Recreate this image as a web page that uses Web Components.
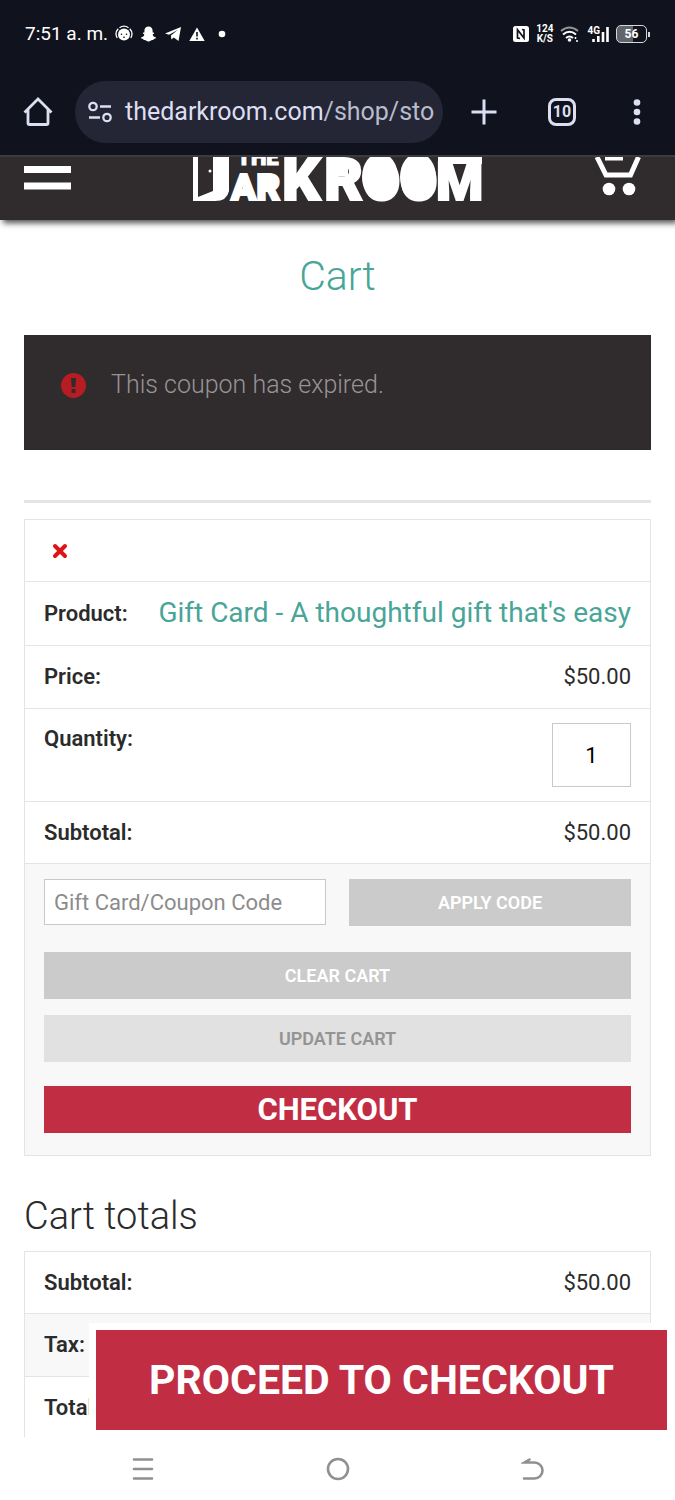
<!DOCTYPE html>
<html lang="en">
<head>
<meta charset="utf-8">
<meta name="viewport" content="width=device-width, initial-scale=1">
<title>Cart - The Darkroom</title>
<style>
  body { margin: 0; font-family: Roboto, "Liberation Sans", sans-serif; color: #2b2b2b; background: #fff; }
</style>
</head>
<body>
<phone-screen>
  <status-bar slot="top"></status-bar>
  <browser-toolbar slot="top"></browser-toolbar>
  <site-header></site-header>
  <cart-page>
    <notice-banner>This coupon has expired.</notice-banner>
    <cart-table></cart-table>
    <totals-table></totals-table>
  </cart-page>
  <checkout-bar slot="overlay"></checkout-bar>
  <system-nav slot="bottom"></system-nav>
</phone-screen>

<script>
const define = (name, html) => {
  const template = document.createElement('template');
  template.innerHTML = html;
  customElements.define(name, class extends HTMLElement {
    constructor() {
      super();
      this.attachShadow({ mode: 'open' }).append(template.content.cloneNode(true));
    }
  });
};

define('phone-screen', `
<style>
  :host { display: flex; flex-direction: column; height: 100vh; }
  .view { flex: 1; min-height: 0; position: relative; overflow: hidden; }
</style>
<slot name="top"></slot>
<div class="view"><slot></slot><slot name="overlay"></slot></div>
<slot name="bottom"></slot>`);

define('status-bar', `
<style>
  :host { display: flex; align-items: center; justify-content: space-between; height: 68px; padding: 0 25px; background: #10131d; color: #fff; }
  .group { display: flex; align-items: center; gap: 7px; }
  .time { font-size: 19px; line-height: 24px; }
  svg { display: block; }
  .speed { display: grid; font-size: 10px; line-height: 10px; font-weight: 700; text-align: center; }
  .signal { display: flex; }
  .cell { font-size: 10px; line-height: 10px; font-weight: 700; }
  .bars { margin-left: -8px; }
  .power { display: flex; align-items: center; gap: 1px; }
  .battery { box-sizing: border-box; width: 31px; height: 18px; border: 1px solid #d8d8dc; border-radius: 5px; font-size: 12px; line-height: 16px; font-weight: 700; text-align: center; background: linear-gradient(90deg, #62646b 55%, transparent 55%); }
  .tip { width: 2px; height: 5px; background: #d8d8dc; }
</style>
<div class="group">
  <span class="time">7:51 a. m.</span>
  <svg width="18" height="18" viewBox="0 0 18 18" aria-hidden="true"><circle cx="9" cy="9.500" r="6" fill="#fff"/><path d="M2.200 13a8 8 0 0 1 1-9.300M15.800 13a8 8 0 0 0-1-9.300M4.500 2.700a8 8 0 0 1 9 0" fill="none" stroke="#fff" stroke-width="1.300"/><circle cx="6.500" cy="9.200" r=".8" fill="#10131d"/><circle cx="11.500" cy="9.200" r=".8" fill="#10131d"/><path d="M8 12q1 .8 2 0" stroke="#10131d" fill="none"/></svg>
  <svg width="17" height="16" viewBox="0 0 17 16" aria-hidden="true"><path d="M8.500.5C11 .5 12.600 2.200 12.600 4.600v2c.7 0 1.500 0 1.500.6 0 .7-1.500.9-1.400 1.500.3 1.300 1.500 2.200 3.300 2.700.3.900-1 1.300-2.300 1.500-.2.700-.2 1.100-.8 1.100-2.200-.2-2.300 1.500-4.400 1.500S6.300 13.800 4.100 14c-.6 0-.6-.4-.8-1.100C2 12.700.7 12.300 1 11.400c1.800-.5 3-1.400 3.300-2.700.1-.6-1.400-.8-1.400-1.500 0-.6.800-.6 1.500-.6v-2C4.400 2.200 6 .5 8.500.5Z" fill="#fff"/></svg>
  <svg width="18" height="16" viewBox="0 0 18 16" aria-hidden="true"><path d="M1 7.500 17 1l-2.500 14-4.700-3.600-2.400 2.200-.5-4L14 3.700 5.200 8.800Z" fill="#fff"/></svg>
  <svg width="16" height="15" viewBox="0 0 16 15" aria-hidden="true"><path d="M8 .5 15.700 14H.3Z" fill="#fff"/><path d="M8 5v4.500M8 10.800v1.700" stroke="#10131d" stroke-width="1.600"/></svg>
  <svg width="20" height="8" viewBox="0 0 20 8" aria-hidden="true"><circle cx="10" cy="4" r="3.300" fill="#fff"/></svg>
</div>
<div class="group">
  <svg width="16" height="16" viewBox="0 0 16 16" aria-hidden="true"><rect width="16" height="16" rx="2.500" fill="#fff"/><path d="M7 12.300 4.500 12V3.800L11 12V4L9 3.500" fill="none" stroke="#10131d" stroke-width="1.700"/></svg>
  <span class="speed"><span>124</span><span>K/S</span></span>
  <svg width="20" height="17" viewBox="0 0 20 17" aria-hidden="true"><g fill="none" stroke="#fff" stroke-width="2"><path d="M1 5q8.500-7 17 0" opacity=".55"/><path d="M3 8.500q6.500-5.500 13 0M6 12q3.500-3 7 0"/></g><circle cx="9.500" cy="14" r="1.800" fill="#fff"/><path d="M15.500 11v2M17 14v2" stroke="#fff" stroke-width="1.500"/></svg>
  <div class="signal">
    <span class="cell">4G</span>
    <svg class="bars" width="17" height="17" viewBox="0 0 17 17" aria-hidden="true"><path d="M1.500 13v3M6.300 10v6M11 6v10M15.500 1v15" stroke="#fff" stroke-width="2.600"/></svg>
  </div>
  <div class="power"><div class="battery">56</div><i class="tip"></i></div>
</div>`);

define('browser-toolbar', `
<style>
  :host { display: grid; grid-template-columns: 75px 1fr 82px 74px 76px; align-items: center; height: 87px; background: #10131d; border-bottom: 2px solid #3c3a45; }
  button { display: grid; place-items: center; min-width: 0; border: 0; padding: 0; background: none; color: #dcdff2; font: inherit; height: 62px; }
  .url { display: flex; align-items: center; gap: 12px; padding: 0 12px; border-radius: 31px; background: #242635; font-size: 25px; line-height: 32px; white-space: nowrap; }
  .path { color: #b9bccd; }
  .count { box-sizing: border-box; width: 28px; height: 28px; border: 3px solid #dcdff2; border-radius: 8px; font-size: 16px; line-height: 22px; font-weight: 700; text-align: center; }
  svg { display: block; flex: none; }
</style>
<button aria-label="Home"><svg width="30" height="30" viewBox="0 0 30 30"><path d="M1.500 15.500 15 2l13.500 13.500M5 12.500V26q0 1.500 1.500 1.500h17Q25 27.500 25 26V12.500" fill="none" stroke="#dcdff2" stroke-width="2.800"/></svg></button>
<button class="url"><svg width="26" height="22" viewBox="0 0 26 22"><g fill="none" stroke="#dcdff2" stroke-width="2.300"><circle cx="6" cy="5.500" r="3.700"/><path d="M13 5.500h11M2 16.500h11"/><circle cx="20" cy="16.500" r="3.700"/></g></svg><span>thedarkroom.com<span class="path">/shop/sto</span></span></button>
<button aria-label="New tab"><svg width="26" height="26" viewBox="0 0 26 26"><path d="M13 .5v25M.5 13h25" stroke="#dcdff2" stroke-width="3"/></svg></button>
<button aria-label="Tabs"><span class="count">10</span></button>
<button aria-label="Menu"><svg width="8" height="26" viewBox="0 0 8 26"><g fill="#dcdff2"><circle cx="4" cy="3.500" r="3.300"/><circle cx="4" cy="13" r="3.300"/><circle cx="4" cy="22.500" r="3.300"/></g></svg></button>`);

define('site-header', `
<style>
  :host { display: grid; grid-template-columns: 75px 1fr 75px; justify-items: center; align-items: start; height: 63px; padding: 0 19px; background: #302b2c; box-shadow: 3px 3px 6px rgba(0, 0, 0, .7); }
  button, a { display: block; border: 0; padding: 0; background: none; }
  button { justify-self: start; padding: 9px 0 0 5px; }
  .cart { justify-self: end; padding-right: 13px; }
  svg { display: block; }
  text { font-family: Roboto, sans-serif; font-weight: 900; stroke: #fff; }
</style>
<button aria-label="Menu"><svg width="47" height="24" viewBox="0 0 47 24"><path d="M0 3.500h47M0 20h47" stroke="#fff" stroke-width="7"/></svg></button>
<a href="#" aria-label="The Darkroom"><svg width="290" height="50" viewBox="0 0 290 50">
  <g fill="#fff">
    <text x="0" y="43" font-size="54" stroke-width="2">D</text>
    <text x="38" y="43" font-size="37" stroke-width="2">AR</text>
    <text x="44" y="8" font-size="22">THE</text>
    <text x="89" y="43" font-size="60" stroke-width="2">K</text>
    <text x="131" y="43" font-size="60" stroke-width="2">R<tspan x="170" font-size="54">OO</tspan><tspan x="243" font-size="54">M</tspan></text>
    <!-- solid shapes that fill the letters' counters -->
    <ellipse cx="187" cy="20" rx="18" ry="24"/>
    <ellipse cx="225" cy="20" rx="18" ry="24"/>
    <path d="M144 9h11v10h-11ZM245 0h44v7h-44Z"/>
    <path d="M48 39l3-14h3l3 14ZM72 23h8v7h-8Z"/>
    <path d="M0 0H36V34Q34 44 22 44H0Z"/>
  </g>
  <path d="M5 0H20V34L5 40Z" fill="#302b2c"/><circle cx="17" cy="14" r="1.500" fill="#fff"/>
</svg></a>
<a class="cart" href="#" aria-label="Shopping cart"><svg width="50" height="42" viewBox="0 0 50 42"><path d="M4 0 13 18H37.500L45.500 0M12 1H30" fill="none" stroke="#fff" stroke-width="5"/><circle cx="16" cy="32" r="6.300" fill="#fff"/><circle cx="36" cy="32" r="6.300" fill="#fff"/></svg></a>`);

define('cart-page', `
<style>
  :host { display: block; padding: 32px 24px 0; }
  h1 { margin: 0 0 35px; font-size: 41px; line-height: 48px; font-weight: 300; text-align: center; color: #48a598; }
</style>
<h1>Cart</h1><slot></slot>`);

define('notice-banner', `
<style>
  :host { display: flex; align-items: center; gap: 25px; padding: 33px 37px 48px; background: #302b2c; color: #989496; font-size: 25px; line-height: 34px; font-weight: 300; }
</style>
<svg width="25" height="25" viewBox="0 0 25 25" aria-hidden="true"><circle cx="12.500" cy="12.500" r="12.500" fill="#b81c23"/><path d="M10 5h5l-.7 9h-3.600ZM10.500 16h4v4h-4Z" fill="#302b2c"/></svg>
<span><slot></slot></span>`);

define('action-button', `
<style>
  :host { display: block; }
  button { display: block; width: 100%; height: 47px; border: 0; padding: 0; background: #cbcbcb; color: #fff; font: 600 18px/24px Roboto, sans-serif; text-transform: uppercase; }
  :host([kind=muted]) button { background: #e1e1e1; color: #949494; }
  :host([kind=primary]) button { background: #c12e44; font-size: 31px; font-weight: 700; }
  :host([kind=hero]) button { height: 100px; background: #c12e44; font-size: 41px; font-weight: 700; }
</style>
<button><slot></slot></button>`);

const tableStyle = `
  table { width: 100%; border-spacing: 0; border: 1px solid #e4e4e4; font-size: 22px; line-height: 30px; }
  th, td { box-sizing: border-box; height: 63px; padding: 0 19px; border-bottom: 1px solid #e4e4e4; white-space: nowrap; }
  th { padding-right: 0; font-weight: 600; text-align: left; }
  td { text-align: right; }
  .short > * { height: 62px; }`;

define('cart-table', `
<style>
  :host { display: block; margin-top: 50px; border-top: 3px solid #e5e5e5; padding-top: 16px; }
  ${tableStyle}
  td.remove { height: 62px; text-align: left; padding-left: 27px; }
  .remove button { display: block; border: 0; padding: 0; background: none; }
  svg { display: block; }
  a { color: #48a598; font-size: 28px; text-decoration: none; }
  .product > * { height: 64px; }
  .quantity > * { height: 93px; }
  .quantity th { vertical-align: top; padding-top: 15px; }
  .quantity input { box-sizing: border-box; display: block; width: 79px; height: 64px; margin-left: auto; border: 1px solid #c9c9c9; padding: 0; color: #000; font: 22px/30px Roboto, sans-serif; text-align: center; }
  td.actions { height: auto; padding: 15px 19px 22px; border-bottom: 0; background: #f8f8f8; }
  .coupon { display: grid; grid-template-columns: 1fr 1fr; gap: 23px; align-items: start; }
  .coupon input { box-sizing: border-box; min-width: 0; height: 46px; border: 1px solid #c9c9c9; border-radius: 0; padding: 0 9px; background: #fff; font: 22px/30px Roboto, sans-serif; }
  input::placeholder { color: #8c8c8c; opacity: 1; }
  .stack { display: grid; gap: 16px; margin: 26px 0 24px; }
</style>
<table>
  <tr><td class="remove" colspan="2"><button aria-label="Remove item"><svg width="16" height="16" viewBox="0 0 16 16"><path d="m3 3 10 10M13 3 3 13" stroke="#dc1417" stroke-width="4" stroke-linecap="round"/></svg></button></td></tr>
  <tr class="product"><th scope="row">Product:</th><td><a href="#">Gift Card - A thoughtful gift that's easy</a></td></tr>
  <tr><th scope="row">Price:</th><td>$50.00</td></tr>
  <tr class="quantity"><th scope="row"><label for="qty">Quantity:</label></th><td><input id="qty" type="text" inputmode="numeric" value="1"></td></tr>
  <tr class="short"><th scope="row">Subtotal:</th><td>$50.00</td></tr>
  <tr><td class="actions" colspan="2">
    <div class="coupon"><input type="text" aria-label="Gift Card/Coupon Code" placeholder="Gift Card/Coupon Code"><action-button>Apply code</action-button></div>
    <div class="stack"><action-button>Clear cart</action-button><action-button kind="muted">Update cart</action-button></div>
    <action-button kind="primary">Checkout</action-button>
  </td></tr>
</table>`);

define('totals-table', `
<style>
  :host { display: block; margin-top: 36px; }
  h2 { margin: 0 0 11px; font-size: 38px; line-height: 48px; font-weight: 300; }
  ${tableStyle}
  .tax > * { background: #f8f8f8; }
</style>
<h2>Cart totals</h2>
<table>
  <tr class="short"><th scope="row">Subtotal:</th><td>$50.00</td></tr>
  <tr class="tax"><th scope="row">Tax:</th><td></td></tr>
  <tr class="short"><th scope="row">Total:</th><td></td></tr>
</table>`);

define('checkout-bar', `
<style>
  :host { display: block; position: absolute; left: 89px; right: 0; bottom: 0; padding: 7px 8px 7px 7px; background: #fff; }
</style>
<action-button kind="hero">Proceed to checkout</action-button>`);

define('system-nav', `
<style>
  :host { display: flex; justify-content: center; height: 63px; background: #fff; }
  button { display: grid; place-items: center; width: 195px; border: 0; padding: 0; background: none; }
  g { fill: none; stroke: #909090; stroke-width: 2.600; stroke-linecap: round; }
</style>
<button aria-label="Recent apps"><svg width="24" height="24" viewBox="0 0 24 24"><g><path d="M3 2.500h18M3 12h18M3 21.500h18"/></g></svg></button>
<button aria-label="Home"><svg width="24" height="24" viewBox="0 0 24 24"><g><circle cx="12" cy="12" r="10"/></g></svg></button>
<button aria-label="Back"><svg width="24" height="24" viewBox="0 0 24 24"><g><path d="M3 21.500h10.500a8 8 0 0 0 0-16H3.500L8.500 2.500"/></g></svg></button>`);
</script>
</body>
</html>
